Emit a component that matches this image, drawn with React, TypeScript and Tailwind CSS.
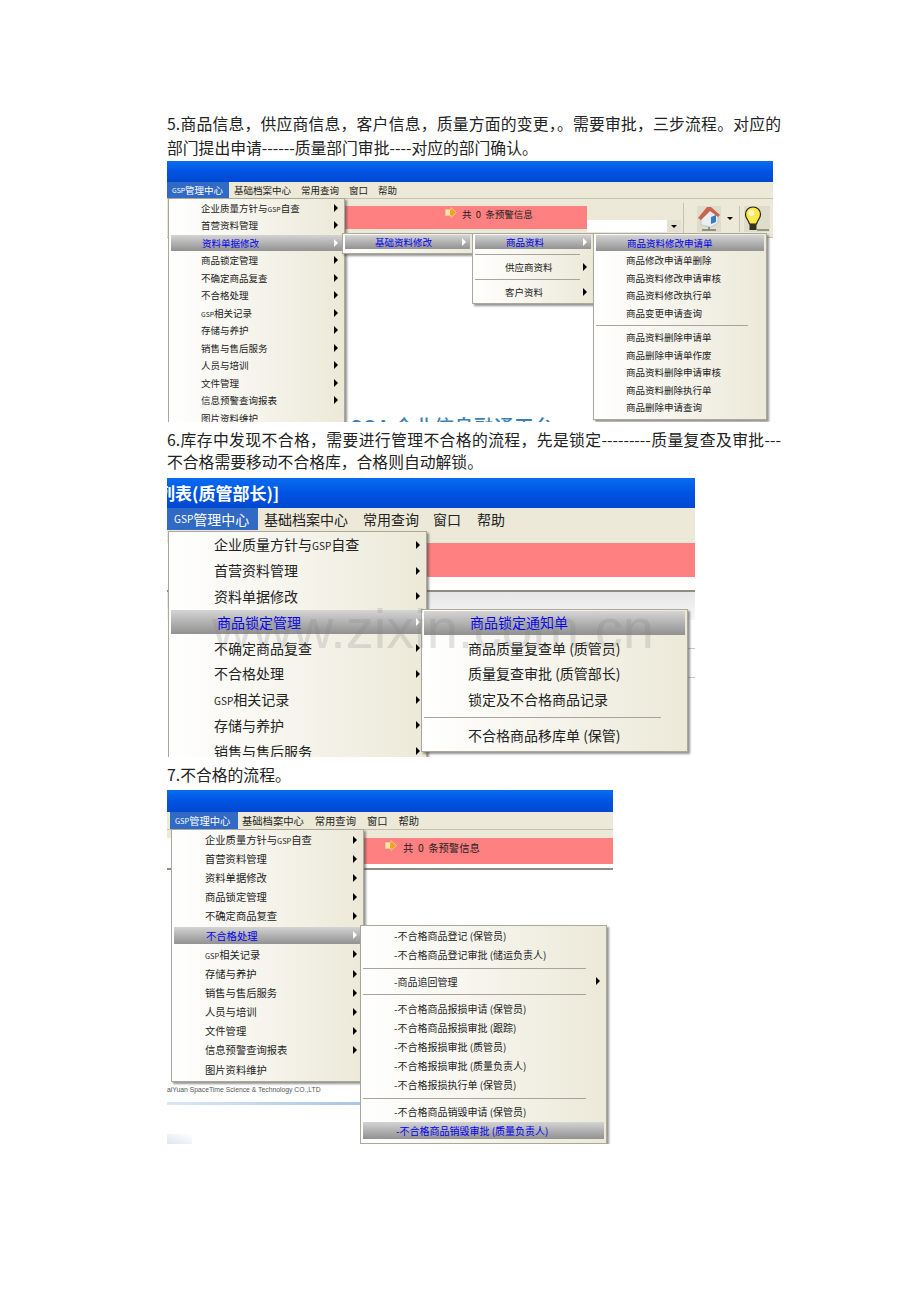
const titleBar = 'bg-gradient-to-b from-[#0a6cf0] via-[#0054e3] to-[#0048d0]'
const cjk = "[font-family:'Noto_Sans_CJK_SC','Liberation_Sans',sans-serif]"

type Row = { label?: string; active?: boolean; arrow?: boolean; sep?: boolean }

interface MenuProps {
  rows: Row[]
  box: string
  rowH: string
  sepH: string
  sepW: string
  text: string
  indent: string
  activeIndent: string
}

// the app's GSP is set in a much narrower face than the CJK around it
function Label({ text }: { text?: string }) {
  if (!text || !text.includes('GSP')) return <>{text}</>
  const [before, after] = text.split('GSP')
  return (
    <>
      {before}
      <span className="text-[0.72em]">GSP</span>
      {after}
    </>
  )
}

function Menu({ rows, box, rowH, sepH, sepW, text, indent, activeIndent }: MenuProps) {
  return (
    <div className={`absolute z-10 border border-[#aca899] bg-gradient-to-r from-white to-[#ece9d8] px-[2px] shadow-[2px_2px_2px_rgba(60,60,60,0.55)] ${box} ${text}`}>
      {rows.map((row, i) =>
        row.sep ? (
          <div key={i} className={`flex items-center ${sepH}`}>
            <div className={`h-px bg-[#a8a49a] ${sepW}`} />
          </div>
        ) : (
          <div
            key={i}
            className={`flex items-center whitespace-nowrap ${rowH} ${
              row.active
                ? 'bg-gradient-to-b from-[#d8d8d8] to-[#8e8e8e] bg-clip-content py-[1px] text-[#0000f0]'
                : 'text-[#222]'
            }`}
          >
            <span className={row.active ? activeIndent : indent}>
              <Label text={row.label} />
            </span>
            {row.arrow && (
              <span
                className={`ml-auto mr-[4px] h-0 w-0 shrink-0 border-y-[4px] border-l-[4px] border-y-transparent ${
                  row.active ? 'border-l-white' : 'border-l-black'
                }`}
              />
            )}
          </div>
        ),
      )}
    </div>
  )
}

function MenuBar({ h, text, active, items }: { h: string; text: string; active: string; items: { label: string; cls: string }[] }) {
  return (
    <div className={`flex items-center bg-[#ece9d8] text-[#222] ${h} ${text}`}>
      <div className={`flex h-full items-center bg-[#316ac5] text-white ${active}`}>
        <Label text="GSP管理中心" />
      </div>
      {items.map(item => (
        <span key={item.label} className={`whitespace-nowrap ${item.cls}`}>
          {item.label}
        </span>
      ))}
    </div>
  )
}

function ArrowIcon() {
  return (
    <svg width="12" height="11" viewBox="0 0 12 11" className="shrink-0">
      <path d="M0.5 2.5H6V0.5L11.5 5.5L6 10.5V8.5H0.5Z" fill="#f7a11f" stroke="#e8d9b0" strokeWidth="0.7" />
      <rect x="1" y="3" width="4" height="5" fill="#ffe3a8" />
    </svg>
  )
}

function HomeIcon() {
  return (
    <svg width="24" height="26" viewBox="0 0 24 26" className="bg-[#dfdccb]">
      <path d="M4 11V19L14 21L21 17V9L13 4Z" fill="#e9eef4" stroke="#a9b5c2" strokeWidth="0.6" />
      <path d="M1 12L10 1H14L23 9L21 11L13 5L4 14Z" fill="#c9644e" />
      <path d="M14 11L19 9V16L14 18Z" fill="#3878c8" />
      <path d="M12 21V24M5 24H19" stroke="#7a7a6a" strokeWidth="1.4" />
    </svg>
  )
}

function BulbIcon() {
  return (
    <svg width="26" height="26" viewBox="0 0 26 26" className="bg-[#dfdccb]">
      <path d="M9 1C4.5 1 1.5 4.3 1.5 8.5C1.5 12 4.5 14 5.5 18H12.5C13.5 14 16.5 12 16.5 8.5C16.5 4.3 13.5 1 9 1Z" fill="#ffe84a" stroke="#20200c" strokeWidth="1.2" />
      <circle cx="7.5" cy="7" r="3" fill="#fffbd0" />
      <path d="M5.5 18H12.5V24H5.5Z" fill="#33331f" />
      <path d="M13 24H25" stroke="#77776a" strokeWidth="1.4" />
    </svg>
  )
}

const firstMenu: Row[] = [
  { label: '企业质量方针与GSP自查', arrow: true },
  { label: '首营资料管理', arrow: true },
  { label: '资料单据修改', arrow: true, active: true },
  { label: '商品锁定管理', arrow: true },
  { label: '不确定商品复查', arrow: true },
  { label: '不合格处理', arrow: true },
  { label: 'GSP相关记录', arrow: true },
  { label: '存储与养护', arrow: true },
  { label: '销售与售后服务', arrow: true },
  { label: '人员与培训', arrow: true },
  { label: '文件管理', arrow: true },
  { label: '信息预警查询报表', arrow: true },
  { label: '图片资料维护' },
]

const editMenu: Row[] = [
  { label: '商品资料修改申请单', active: true },
  { label: '商品修改申请单删除' },
  { label: '商品资料修改申请审核' },
  { label: '商品资料修改执行单' },
  { label: '商品变更申请查询' },
  { sep: true },
  { label: '商品资料删除申请单' },
  { label: '商品删除申请单作废' },
  { label: '商品资料删除申请审核' },
  { label: '商品资料删除执行单' },
  { label: '商品删除申请查询' },
]

const secondMenu: Row[] = [
  { label: '企业质量方针与GSP自查', arrow: true },
  { label: '首营资料管理', arrow: true },
  { label: '资料单据修改', arrow: true },
  { label: '商品锁定管理', arrow: true, active: true },
  { label: '不确定商品复查', arrow: true },
  { label: '不合格处理', arrow: true },
  { label: 'GSP相关记录', arrow: true },
  { label: '存储与养护', arrow: true },
  { label: '销售与售后服务', arrow: true },
]

const lockMenu: Row[] = [
  { label: '商品锁定通知单', active: true },
  { label: '商品质量复查单 (质管员)' },
  { label: '质量复查审批 (质管部长)' },
  { label: '锁定及不合格商品记录' },
  { sep: true },
  { label: '不合格商品移库单 (保管)' },
]

const thirdMenu: Row[] = firstMenu.map(row =>
  row.label === '不合格处理' ? { ...row, active: true } : { label: row.label, arrow: row.arrow },
)

const rejectMenu: Row[] = [
  { label: '-不合格商品登记 (保管员)' },
  { label: '-不合格商品登记审批 (储运负责人)' },
  { sep: true },
  { label: '-商品追回管理', arrow: true },
  { sep: true },
  { label: '-不合格商品报损申请 (保管员)' },
  { label: '-不合格商品报损审批 (跟踪)' },
  { label: '-不合格报损审批 (质管员)' },
  { label: '-不合格报损审批 (质量负责人)' },
  { label: '-不合格报损执行单 (保管员)' },
  { sep: true },
  { label: '-不合格商品销毁申请 (保管员)' },
  { label: '-不合格商品销毁审批 (质量负责人)', active: true },
]

export default function App() {
  return (
    <div className={`relative h-[1302px] w-[920px] overflow-hidden bg-white pl-[167px] pt-[112px] ${cjk}`}>
      <div className="w-[614px] text-[15.8px] leading-[24px] text-[#222]">
        <p className="whitespace-nowrap text-justify [text-align-last:justify]">
          5.商品信息，供应商信息，客户信息，质量方面的变更，。需要审批，三步流程。对应的
        </p>
        <p>部门提出申请------质量部门审批----对应的部门确认。</p>
      </div>

      {/* first screenshot */}
      <div className="relative mt-[1px] h-[261px] w-[606px] overflow-hidden bg-white">
        <div className={`h-[21px] ${titleBar}`} />
        <MenuBar
          h="h-[16px]"
          text="text-[9.5px]"
          active="w-[62px] pl-[5px] text-[#dfe8f8]"
          items={[
            { label: '基础档案中心', cls: 'ml-[5px]' },
            { label: '常用查询', cls: 'ml-[10px]' },
            { label: '窗口', cls: 'ml-[10px]' },
            { label: '帮助', cls: 'ml-[10px]' },
          ]}
        />
        <div className="relative h-[40px] border-y border-[#c4c1b2] bg-[#ece9d8]">
          <div className="absolute left-[178px] top-[7px] flex h-[23px] w-[242px] items-start gap-[5px] bg-[#ff8080] pl-[100px] pt-[1px] text-[9.5px] text-[#222]">
            <ArrowIcon />
            <span className="whitespace-pre">共  0  条预警信息</span>
          </div>
          <div className="absolute left-[420px] top-[21px] flex h-[12px] w-[94px] justify-end bg-white">
            <span className="flex w-[14px] items-center justify-center bg-[#e4e1d2]">
              <span className="h-0 w-0 border-x-[3px] border-t-[3px] border-x-transparent border-t-black" />
            </span>
          </div>
          <div className="absolute left-[516px] top-[4px] flex h-[31px] items-center border-l border-[#c4c1b2] pl-[13px]">
            <HomeIcon />
            <span className="ml-[6px] h-0 w-0 border-x-[3px] border-t-[3px] border-x-transparent border-t-black" />
            <span className="ml-[6px] h-[26px] w-px bg-[#c4c1b2]" />
            <span className="ml-[4px]">
              <BulbIcon />
            </span>
          </div>
        </div>
        <div className="absolute left-[183px] top-[254px] whitespace-nowrap text-[20px] font-medium leading-[24px] text-[#3b7fb4]">
          SOA 企业信息融通平台
        </div>
        <Menu
          rows={firstMenu}
          box="left-[1px] top-[37px] w-[177px] h-[228px]"
          rowH="h-[17.5px]"
          sepH="h-[8px]"
          sepW="w-full"
          text="text-[9.5px]"
          indent="ml-[30px]"
          activeIndent="ml-[31px]"
        />
        <Menu
          rows={[{ label: '基础资料修改', arrow: true, active: true }]}
          box="left-[175px] top-[72px] w-[131px] h-[21px]"
          rowH="h-[16px]"
          sepH="h-[8px]"
          sepW="w-full"
          text="text-[9.5px]"
          indent="ml-[30px]"
          activeIndent="ml-[30px]"
        />
        <Menu
          rows={[
            { label: '商品资料', arrow: true, active: true },
            { sep: true },
            { label: '供应商资料', arrow: true },
            { sep: true },
            { label: '客户资料', arrow: true },
          ]}
          box="left-[305px] top-[72px] w-[122px] h-[71px]"
          rowH="h-[16px]"
          sepH="h-[9px]"
          sepW="w-[105px]"
          text="text-[9.5px]"
          indent="ml-[30px]"
          activeIndent="ml-[31px]"
        />
        <Menu
          rows={editMenu}
          box="left-[426px] top-[72px] w-[174px] h-[187px]"
          rowH="h-[17.5px]"
          sepH="h-[7px]"
          sepW="w-[152px]"
          text="text-[9.5px]"
          indent="ml-[30px]"
          activeIndent="ml-[31px]"
        />
      </div>

      <div className="mt-[7px] w-[614px] text-[15.8px] leading-[22px] text-[#222]">
        <p className="whitespace-nowrap text-justify [text-align-last:justify]">
          6.库存中发现不合格，需要进行管理不合格的流程，先是锁定---------质量复查及审批---
        </p>
        <p>不合格需要移动不合格库，合格则自动解锁。</p>
      </div>

      {/* second screenshot */}
      <div className="relative mt-[5px] h-[279px] w-[528px] overflow-hidden bg-white">
        <div className={`flex h-[30px] items-center overflow-hidden whitespace-nowrap text-[17px] font-bold text-white ${titleBar}`}>
          <span className="ml-[-9px]">列表(质管部长)]</span>
        </div>
        <MenuBar
          h="h-[22px]"
          text="text-[14px]"
          active="w-[91px] pl-[7px] text-[#dfe8f8]"
          items={[
            { label: '基础档案中心', cls: 'ml-[6px]' },
            { label: '常用查询', cls: 'ml-[15px]' },
            { label: '窗口', cls: 'ml-[14px]' },
            { label: '帮助', cls: 'ml-[16px]' },
          ]}
        />
        <div className="h-[13px] bg-[#ece9d8]" />
        <div className="ml-[260px] h-[34px] bg-[#ff8080]" />
        <div className="h-[13px] bg-white" />
        <div className="h-[2px] bg-[#8f8d82]" />
        <div className="h-[28px] bg-gradient-to-b from-[#e6e6e6] to-[#f8f8f8]" />
        <div className="ml-[520px] border-b border-[#c8c8c8] py-[14px]" />
        <div className="ml-[520px] border-b border-[#c8c8c8] py-[14px]" />
        <Menu
          rows={secondMenu}
          box="left-[1px] top-[53px] w-[259px] h-[240px]"
          rowH="h-[25.8px]"
          sepH="h-[8px]"
          sepW="w-full"
          text="text-[14px]"
          indent="ml-[43px]"
          activeIndent="ml-[46px]"
        />
        <Menu
          rows={lockMenu}
          box="left-[254px] top-[131px] w-[267px] h-[143px]"
          rowH="h-[25.6px]"
          sepH="h-[10px]"
          sepW="w-[237px]"
          text="text-[14px]"
          indent="ml-[44px]"
          activeIndent="ml-[46px]"
        />
      </div>

      {/* site watermark, sits over the second screenshot */}
      <div className="absolute left-[212px] top-[594px] z-20 whitespace-nowrap font-['Liberation_Sans',sans-serif] text-[56px] leading-[70px] text-[#80808038]">
        www.zixin.com.cn
      </div>

      <p className="mt-[7px] text-[15.8px] leading-[22px] text-[#222]">7.不合格的流程。</p>

      {/* third screenshot */}
      <div className="relative mt-[4px] h-[354px] w-[446px] overflow-hidden bg-white">
        <div className={`h-[22px] ${titleBar}`} />
        <MenuBar
          h="h-[17px]"
          text="text-[10.3px]"
          active="ml-[3px] w-[68px] pl-[5px] text-[#dfe8f8]"
          items={[
            { label: '基础档案中心', cls: 'ml-[4px]' },
            { label: '常用查询', cls: 'ml-[11px]' },
            { label: '窗口', cls: 'ml-[11px]' },
            { label: '帮助', cls: 'ml-[11px]' },
          ]}
        />
        <div className="h-[9px] border-t border-[#c4c1b2] bg-[#ece9d8]" />
        <div className="ml-[197px] flex h-[26px] items-start gap-[6px] bg-[#ff8080] pl-[21px] pt-[2px] text-[10.3px] text-[#222]">
          <ArrowIcon />
          <span className="whitespace-pre">共  0  条预警信息</span>
        </div>
        <div className="h-[4px] bg-white" />
        <div className="h-[2px] bg-[#8f8d82]" />
        <div className="absolute left-0 top-[295px] whitespace-nowrap font-['Liberation_Sans',sans-serif] text-[6.8px] leading-[10px] text-[#555]">
          aiYuan SpaceTime Science &amp; Technology CO.,LTD
        </div>
        <div className="absolute left-0 top-[312px] h-[3px] w-[195px] bg-gradient-to-r from-[#dbe7f4] to-[#a9c6e8]" />
        <div className="absolute bottom-0 left-0 h-[10px] w-[25px] bg-gradient-to-tr from-[#dfe6ee] to-white" />
        <Menu
          rows={thirdMenu}
          box="left-[4px] top-[39px] w-[193px] h-[253px]"
          rowH="h-[19.15px]"
          sepH="h-[8px]"
          sepW="w-full"
          text="text-[10.3px]"
          indent="ml-[31px]"
          activeIndent="ml-[32px]"
        />
        <Menu
          rows={rejectMenu}
          box="left-[193px] top-[135px] w-[247px] h-[219px]"
          rowH="h-[19.2px]"
          sepH="h-[7.5px]"
          sepW="w-[223px]"
          text="text-[10px]"
          indent="ml-[31px]"
          activeIndent="ml-[33px]"
        />
      </div>
    </div>
  )
}
